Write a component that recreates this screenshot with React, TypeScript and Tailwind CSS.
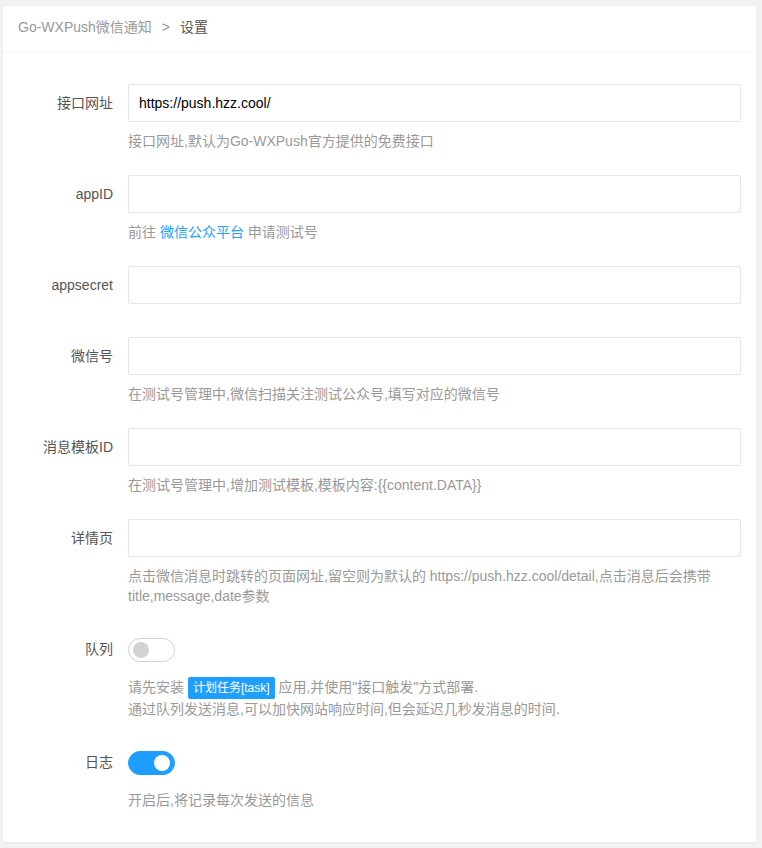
import React, { useState } from "react"

const font = { fontFamily: '"Liberation Sans", "Noto Sans CJK SC", sans-serif' }

function Field({ label, value, hint }: { label: string; value?: string; hint?: React.ReactNode }) {
  return (
    <div className="flex mb-[15px]">
      <label className="w-[110px] shrink-0 pr-[15px] py-[9px] leading-5 text-right text-[#555]">{label}</label>
      <div className="flex-1">
        <input
          defaultValue={value}
          className="block w-full h-[38px] border border-[#e6e6e6] rounded-[2px] px-[10px] text-[14px] text-[#000] outline-none"
          style={font}
        />
        <div className="py-[9px] leading-5 text-[#999]">{hint}</div>
      </div>
    </div>
  )
}

function Switch({ label, on, onToggle, hint }: { label: string; on: boolean; onToggle: () => void; hint: React.ReactNode }) {
  return (
    <div className="flex mb-[15px]">
      <label className="w-[110px] shrink-0 pr-[15px] py-[9px] leading-5 text-right text-[#555]">{label}</label>
      <div className="flex-1">
        <div className="h-[38px] pt-[8px]">
          <button
            onClick={onToggle}
            className={
              on
                ? "relative block w-[47px] h-[24px] rounded-full border border-[#1e9fff] bg-[#1e9fff]"
                : "relative block w-[47px] h-[24px] rounded-full border border-[#d2d2d2] bg-white"
            }
          >
            <span
              className={
                on
                  ? "absolute top-[3px] right-[4px] w-[16px] h-[16px] rounded-full bg-white"
                  : "absolute top-[3px] left-[4px] w-[16px] h-[16px] rounded-full bg-[#d2d2d2]"
              }
            />
          </button>
        </div>
        <div className="py-[9px] leading-5 text-[#999]">{hint}</div>
      </div>
    </div>
  )
}

export default function App() {
  const [queue, setQueue] = useState(false)
  const [log, setLog] = useState(true)

  return (
    <div className="min-h-screen bg-[#f2f2f2] pt-[6px] pl-[3px] pr-[6px] pb-[8px] text-[14px]" style={font}>
      <div className="bg-white rounded-[2px] shadow-[0_1px_2px_0_rgba(0,0,0,0.05)]">
        {/* breadcrumb */}
        <div className="h-[47px] flex items-center px-[15px] pb-[4px] border-b border-[#f6f6f6]">
          <span className="text-[#999]">Go-WXPush微信通知</span>
          <span className="text-[#999] mx-[10px]">&gt;</span>
          <span className="text-[#555]">设置</span>
        </div>

        <div className="px-[15px] pt-[31px] pb-[8px]">
          <Field label="接口网址" value="https://push.hzz.cool/" hint="接口网址,默认为Go-WXPush官方提供的免费接口" />
          <Field
            label="appID"
            hint={
              <>
                前往 <a className="text-[#1e9fff]">微信公众平台</a> 申请测试号
              </>
            }
          />
          <Field label="appsecret" />
          <Field label="微信号" hint="在测试号管理中,微信扫描关注测试公众号,填写对应的微信号" />
          <Field label="消息模板ID" hint="在测试号管理中,增加测试模板,模板内容:{{content.DATA}}" />
          <Field
            label="详情页"
            hint="点击微信消息时跳转的页面网址,留空则为默认的 https://push.hzz.cool/detail,点击消息后会携带title,message,date参数"
          />
          <Switch
            label="队列"
            on={queue}
            onToggle={() => setQueue(!queue)}
            hint={
              <>
                请先安装{" "}
                <span className="inline-block align-middle h-[22px] leading-[22px] px-[5px] rounded-[2px] bg-[#1e9fff] text-white text-[12px]">
                  计划任务[task]
                </span>{" "}
                应用,并使用"接口触发"方式部署.
                <br />
                通过队列发送消息,可以加快网站响应时间,但会延迟几秒发消息的时间.
              </>
            }
          />
          <Switch label="日志" on={log} onToggle={() => setLog(!log)} hint="开启后,将记录每次发送的信息" />
        </div>
      </div>
    </div>
  )
}
